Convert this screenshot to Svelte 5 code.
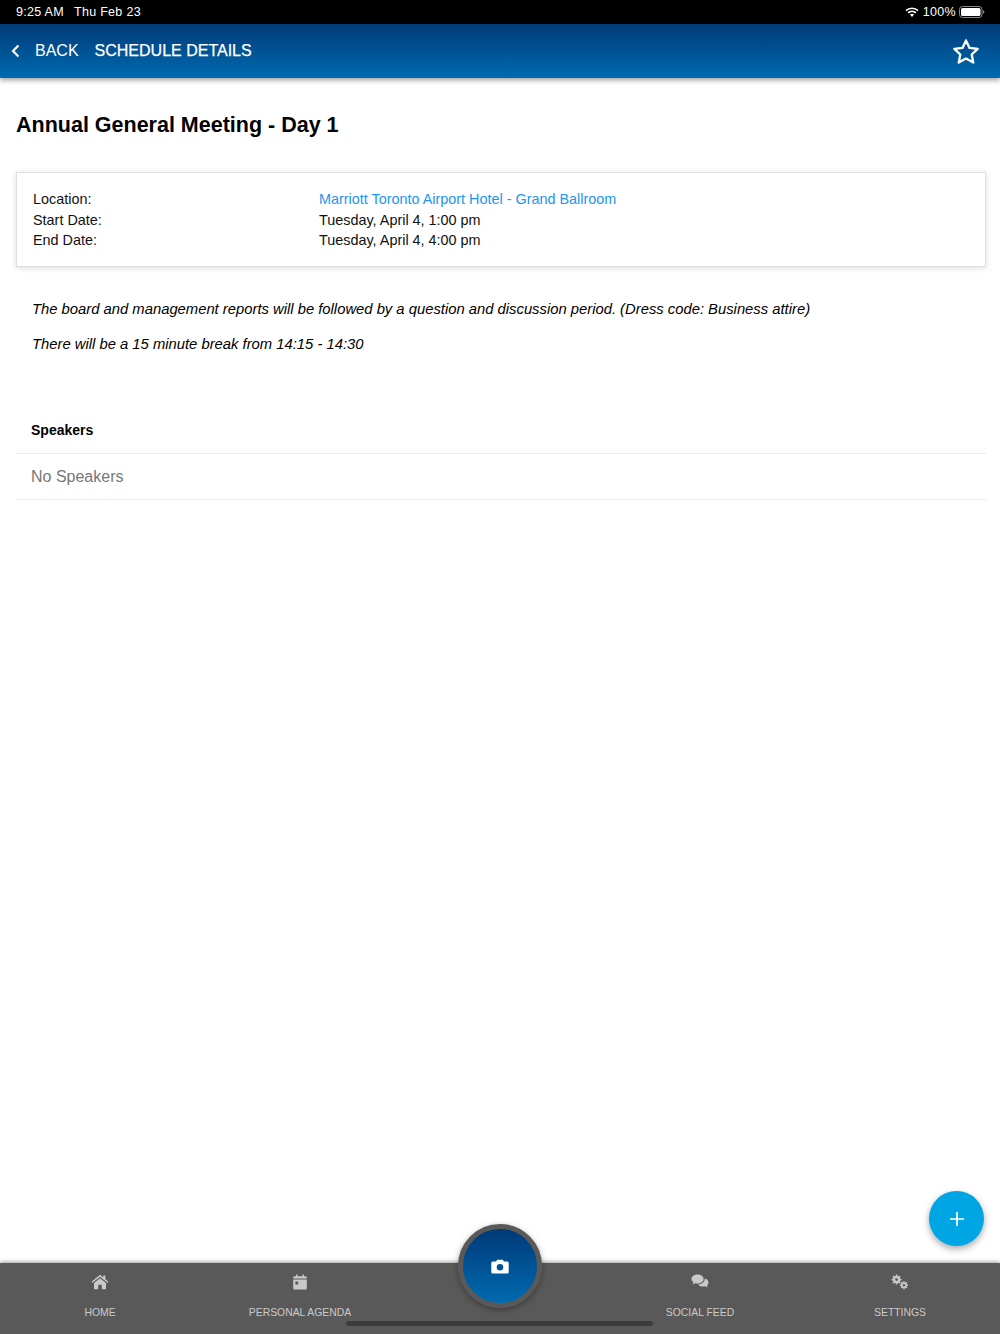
<script>
  const rows = [
    { label: 'Location:', value: 'Marriott Toronto Airport Hotel - Grand Ballroom', link: true },
    { label: 'Start Date:', value: 'Tuesday, April 4, 1:00 pm' },
    { label: 'End Date:', value: 'Tuesday, April 4, 4:00 pm' }
  ];
</script>

<div class="page">
  <div class="status">
    <span class="time">9:25 AM</span>
    <span class="date">Thu Feb 23</span>
    <span class="spacer"></span>
    <svg class="wifi" width="14" height="10" viewBox="0 0 14 10">
      <path d="M7 10 L4.9 7.6 A3.2 3.2 0 0 1 9.1 7.6 Z" fill="#fff"/>
      <path d="M3.1 5.9 A5.8 5.8 0 0 1 10.9 5.9" fill="none" stroke="#fff" stroke-width="1.6"/>
      <path d="M0.9 3.7 A8.9 8.9 0 0 1 13.1 3.7" fill="none" stroke="#fff" stroke-width="1.6"/>
    </svg>
    <span class="pct">100%</span>
    <svg class="battery" width="26" height="12" viewBox="0 0 26 12">
      <rect x="0.5" y="0.5" width="22.5" height="11" rx="3" fill="none" stroke="#8a8a8a"/>
      <rect x="2" y="2" width="19.5" height="8" rx="1.6" fill="#fff"/>
      <path d="M24 4.2 C25 4.5 25.4 5.2 25.4 6 C25.4 6.8 25 7.5 24 7.8 Z" fill="#8a8a8a"/>
    </svg>
  </div>

  <header class="nav">
    <svg class="chev" width="9" height="14" viewBox="0 0 9 14">
      <path d="M7.4 1.5 L2 7 L7.4 12.5" fill="none" stroke="#fff" stroke-width="2.2"/>
    </svg>
    <span class="back">BACK</span>
    <span class="title">SCHEDULE DETAILS</span>
    <span class="spacer"></span>
    <svg class="star" width="28" height="27" viewBox="0 0 28 27">
      <path d="M14 2.4 L17.5 9.9 L25.7 10.9 L19.7 16.5 L21.3 24.6 L14 20.6 L6.7 24.6 L8.3 16.5 L2.3 10.9 L10.5 9.9 Z" fill="none" stroke="#fff" stroke-width="2.3" stroke-linejoin="round"/>
    </svg>
  </header>

  <main class="content">
    <h1>Annual General Meeting - Day 1</h1>

    <section class="card">
      {#each rows as r}
        <div class="row">
          <span class="label">{r.label}</span>
          <span class:link={r.link}>{r.value}</span>
        </div>
      {/each}
    </section>

    <section class="desc">
      <p>The board and management reports will be followed by a question and discussion period. (Dress code: Business attire)</p>
      <p>There will be a 15 minute break from 14:15 - 14:30</p>
    </section>

    <section class="speakers">
      <div class="sp-head">Speakers</div>
      <div class="sp-empty">No Speakers</div>
    </section>
  </main>

  <nav class="tabs">
    <div class="tab">
      <svg width="18" height="16" viewBox="0 0 18 16">
        <path d="M9 0.8 L12.2 3.4 V1.4 H14.4 V5.2 L17.4 7.7 L16.5 8.8 L9 2.8 L1.5 8.8 L0.6 7.7 Z" fill="#c9c9c9"/>
        <path d="M9 4.2 L15 9 V15.2 H10.8 V10.8 H7.2 V15.2 H3 V9 Z" fill="#c9c9c9"/>
      </svg>
      <span>HOME</span>
    </div>
    <div class="tab">
      <svg width="14" height="16" viewBox="0 0 14 16">
        <path fill-rule="evenodd" d="M1.5 2.2 H3 V0.6 H4.4 V2.2 H9.6 V0.6 H11 V2.2 H12.5 A1.3 1.3 0 0 1 13.8 3.5 V4.6 H0.2 V3.5 A1.3 1.3 0 0 1 1.5 2.2 Z M0.2 5.6 H13.8 V14.2 A1.3 1.3 0 0 1 12.5 15.5 H1.5 A1.3 1.3 0 0 1 0.2 14.2 Z M2.4 7.6 V10.4 H5.2 V7.6 Z" fill="#c9c9c9"/>
      </svg>
      <span>PERSONAL AGENDA</span>
    </div>
    <div class="tab"></div>
    <div class="tab">
      <svg width="18" height="16" viewBox="0 0 18 16">
        <path d="M6.6 0.6 C10 0.6 12.6 2.6 12.6 5.1 C12.6 7.6 10 9.6 6.6 9.6 C5.8 9.6 5 9.5 4.3 9.2 C3.4 9.9 2.3 10.3 1.2 10.4 C1.9 9.7 2.3 9 2.4 8.2 C1.2 7.4 0.5 6.3 0.5 5.1 C0.5 2.6 3.2 0.6 6.6 0.6 Z" fill="#c9c9c9"/>
        <path d="M13.7 4.4 C15.9 5 17.5 6.5 17.5 8.4 C17.5 9.5 16.9 10.5 16 11.2 C16.1 12 16.5 12.7 17.1 13.3 C16.1 13.2 15.1 12.8 14.3 12.2 C13.6 12.4 13 12.5 12.3 12.5 C9.9 12.5 7.8 11.6 6.9 10.4 C10.8 10.4 13.7 8.1 13.7 5.1 Z" fill="#c9c9c9"/>
      </svg>
      <span>SOCIAL FEED</span>
    </div>
    <div class="tab">
      <svg width="18" height="16" viewBox="0 0 18 16">
        <g fill="#c9c9c9">
          <circle cx="5.6" cy="5.6" r="3.6"/>
          <g stroke="#c9c9c9" stroke-width="1.7">
            <path d="M5.6 0.6 V10.6 M0.6 5.6 H10.6 M2.1 2.1 L9.1 9.1 M9.1 2.1 L2.1 9.1"/>
          </g>
          <circle cx="13" cy="11.2" r="2.9"/>
          <g stroke="#c9c9c9" stroke-width="1.5">
            <path d="M13 7.2 V15.2 M9 11.2 H17 M10.2 8.4 L15.8 14 M15.8 8.4 L10.2 14"/>
          </g>
        </g>
        <circle cx="5.6" cy="5.6" r="1.4" fill="#595959"/>
        <circle cx="13" cy="11.2" r="1.2" fill="#595959"/>
      </svg>
      <span>SETTINGS</span>
    </div>

    <button class="camera" aria-label="Camera">
      <svg width="18" height="15" viewBox="0 0 18 15">
        <path fill-rule="evenodd" d="M6.2 0.8 H11.8 L13 2.6 H16.2 A1.5 1.5 0 0 1 17.7 4.1 V13 A1.5 1.5 0 0 1 16.2 14.5 H1.8 A1.5 1.5 0 0 1 0.3 13 V4.1 A1.5 1.5 0 0 1 1.8 2.6 H5 Z M9 5 A3.3 3.3 0 1 0 9 11.6 A3.3 3.3 0 1 0 9 5 Z" fill="#fff"/>
      </svg>
    </button>
    <div class="home-bar"></div>
  </nav>

  <button class="fab" aria-label="Add">
    <svg width="16" height="16" viewBox="0 0 16 16">
      <path d="M8 1 V15 M1 8 H15" stroke="#fff" stroke-width="1.7" fill="none"/>
    </svg>
  </button>
</div>

<style>
  :global(body) {
    margin: 0;
    background: #fff;
  }
  .page {
    position: relative;
    width: 1000px;
    height: 1334px;
    display: flex;
    flex-direction: column;
    overflow: hidden;
    font-family: "Liberation Sans", Arial, sans-serif;
    color: #000;
  }
  .spacer {
    flex: 1;
  }
  .status {
    height: 24px;
    flex: none;
    background: #000;
    color: #fff;
    display: flex;
    align-items: center;
    padding: 0 15px 0 16px;
    font-size: 12.5px;
    letter-spacing: 0.3px;
  }
  .date {
    margin-left: 10px;
  }
  .wifi {
    margin-right: 4px;
  }
  .pct {
    margin-right: 3px;
  }
  .nav {
    height: 54px;
    flex: none;
    background: linear-gradient(#003a78, #006bb0);
    box-shadow: 0 2px 5px rgba(0, 0, 0, 0.4);
    display: flex;
    align-items: center;
    color: #fff;
    font-size: 16px;
    padding: 0 20px 0 11px;
    position: relative;
    z-index: 1;
  }
  .back {
    margin-left: 15px;
  }
  .title {
    margin-left: 16px;
    font-weight: 400;
    -webkit-text-stroke: 0.25px #fff;
  }
  .star {
    display: block;
  }
  .content {
    flex: 1;
    padding: 0 14px 0 16px;
    min-height: 0;
  }
  h1 {
    margin: 34px 0 34px;
    font-size: 21.5px;
    line-height: 26px;
    font-weight: 700;
  }
  .card {
    border: 1px solid #e0e0e0;
    box-shadow: 0 1px 6px rgba(0, 0, 0, 0.14);
    padding: 16px 16px 15px 16px;
    font-size: 14.4px;
    line-height: 20.5px;
    color: #111;
  }
  .row {
    display: flex;
  }
  .label {
    width: 286px;
    flex: none;
  }
  .link {
    color: #2196f3;
  }
  .desc {
    padding: 0 16px;
    margin-top: 32px;
    font-size: 14.8px;
    font-style: italic;
    line-height: 20px;
  }
  .desc p {
    margin: 0 0 15px;
  }
  .speakers {
    margin-top: 66px;
  }
  .sp-head {
    padding-left: 15px;
    font-size: 14px;
    font-weight: 700;
    line-height: 20px;
    height: 33px;
    border-bottom: 1px solid #ececec;
  }
  .sp-empty {
    padding-left: 15px;
    height: 45px;
    line-height: 46px;
    font-size: 16px;
    color: #777;
    border-bottom: 1px solid #ececec;
  }
  .tabs {
    position: relative;
    height: 71px;
    flex: none;
    background: #595959;
    box-shadow: 0 -1px 4px rgba(0, 0, 0, 0.4);
    display: grid;
    grid-template-columns: repeat(5, 200px);
  }
  .tab {
    display: flex;
    flex-direction: column;
    align-items: center;
    padding-top: 11px;
    color: #c9c9c9;
    font-size: 10.4px;
  }
  .tab svg {
    height: 16px;
    display: block;
  }
  .tab span {
    margin-top: 17px;
    line-height: 12px;
    white-space: nowrap;
  }
  .camera {
    position: absolute;
    left: 458px;
    top: -39px;
    width: 84px;
    height: 84px;
    box-sizing: border-box;
    border: 5px solid #595959;
    border-radius: 50%;
    padding: 0;
    background: linear-gradient(#003a78, #006bb0);
    box-shadow: 0 2px 6px rgba(0, 0, 0, 0.35);
    display: flex;
    align-items: center;
    justify-content: center;
  }
  .home-bar {
    position: absolute;
    left: 346px;
    top: 58px;
    width: 307px;
    height: 5px;
    border-radius: 3px;
    background: #3c3c3c;
  }
  .fab {
    position: absolute;
    left: 929px;
    top: 1191px;
    width: 55px;
    height: 55px;
    border: 0;
    padding: 0;
    border-radius: 50%;
    background: #00a5e3;
    box-shadow: 0 3px 7px rgba(0, 0, 0, 0.35);
    display: flex;
    align-items: center;
    justify-content: center;
  }
</style>
